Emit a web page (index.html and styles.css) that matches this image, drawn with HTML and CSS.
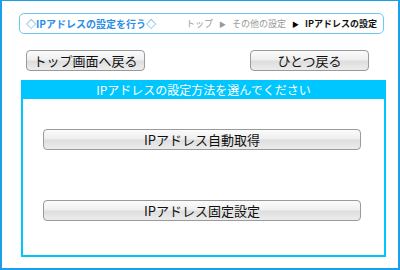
FILE: index.html
```html
<!DOCTYPE html>
<html lang="ja">
<head>
    <meta charset="UTF-8">
    <meta name="viewport" content="width=device-width, initial-scale=1.0">
    <title>IPアドレスの設定</title>
    <link rel="stylesheet" href="styles.css">
</head>
<body>
    <div class="frame">
        <div class="titlebar">
            <span class="title">◇IPアドレスの設定を行う◇</span>
            <span class="crumbs">トップ <span class="arr">▶</span> その他の設定 <span class="arr now">▶</span> <b>IPアドレスの設定</b></span>
        </div>
        <div class="nav">
            <button class="btn small">トップ画面へ戻る</button>
            <button class="btn small">ひとつ戻る</button>
        </div>
        <div class="panel">
            <div class="panel-head">IPアドレスの設定方法を選んでください</div>
            <div class="panel-body">
                <button class="btn wide">IPアドレス自動取得</button>
                <button class="btn wide">IPアドレス固定設定</button>
            </div>
        </div>
    </div>
</body>
</html>
```

FILE: styles.css
```css
*{
    padding: 0;
    margin: 0;
    box-sizing: border-box;
}
body{
    width: 400px;
    height: 270px;
    background: #fff;
    font-family: "Noto Sans CJK JP", "Noto Sans", sans-serif;
}
.frame{
    width: 400px;
    height: 270px;
    border: 2px solid #1a9fe8;
    border-top-width: 1px;
    padding: 12px 16px 0 19px;
}
.titlebar{
    width: 365px;
    height: 21px;
    margin-left: -2px;
    border: 1px solid #6cc8f5;
    border-radius: 5px;
    display: flex;
    align-items: center;
    justify-content: space-between;
    padding: 0 6px 0 6px;
}
.title{
    color: #2b8fe6;
    font-size: 10px;
    font-weight: bold;
}
.crumbs{
    color: #999;
    font-size: 9px;
}
.crumbs .arr{
    font-size: 7px;
    margin: 0 4px;
}
.crumbs .now{
    color: #000;
}
.crumbs b{
    color: #111;
}
.nav{
    display: flex;
    justify-content: space-between;
    margin: 16px 13px 0 5px;
}
.btn{
    font-family: "Noto Sans CJK JP", "Noto Sans", sans-serif;
    color: #111;
    border: 1px solid #9a9a9a;
    border-radius: 4px;
    background: linear-gradient(#fbfbfb 0%, #efefef 45%, #dedede 55%, #ececec 100%);
    display: flex;
    align-items: center;
    justify-content: center;
}
.small{
    width: 119px;
    height: 21px;
    font-size: 13px;
}
.panel{
    margin-top: 9px;
    width: 365px;
    height: 177px;
    border: 2px solid #00c6ff;
    border-top: 0;
    display: flex;
    flex-direction: column;
}
.panel-head{
    background: #00c6ff;
    color: #fff;
    height: 19px;
    font-size: 12px;
    text-align: center;
    line-height: 19px;
    margin: 0 -2px;
}
.panel-body{
    display: flex;
    flex-direction: column;
    gap: 50px;
    padding: 30px 0 0 20px;
}
.wide{
    width: 318px;
    height: 21px;
    font-size: 13px;
}
```
